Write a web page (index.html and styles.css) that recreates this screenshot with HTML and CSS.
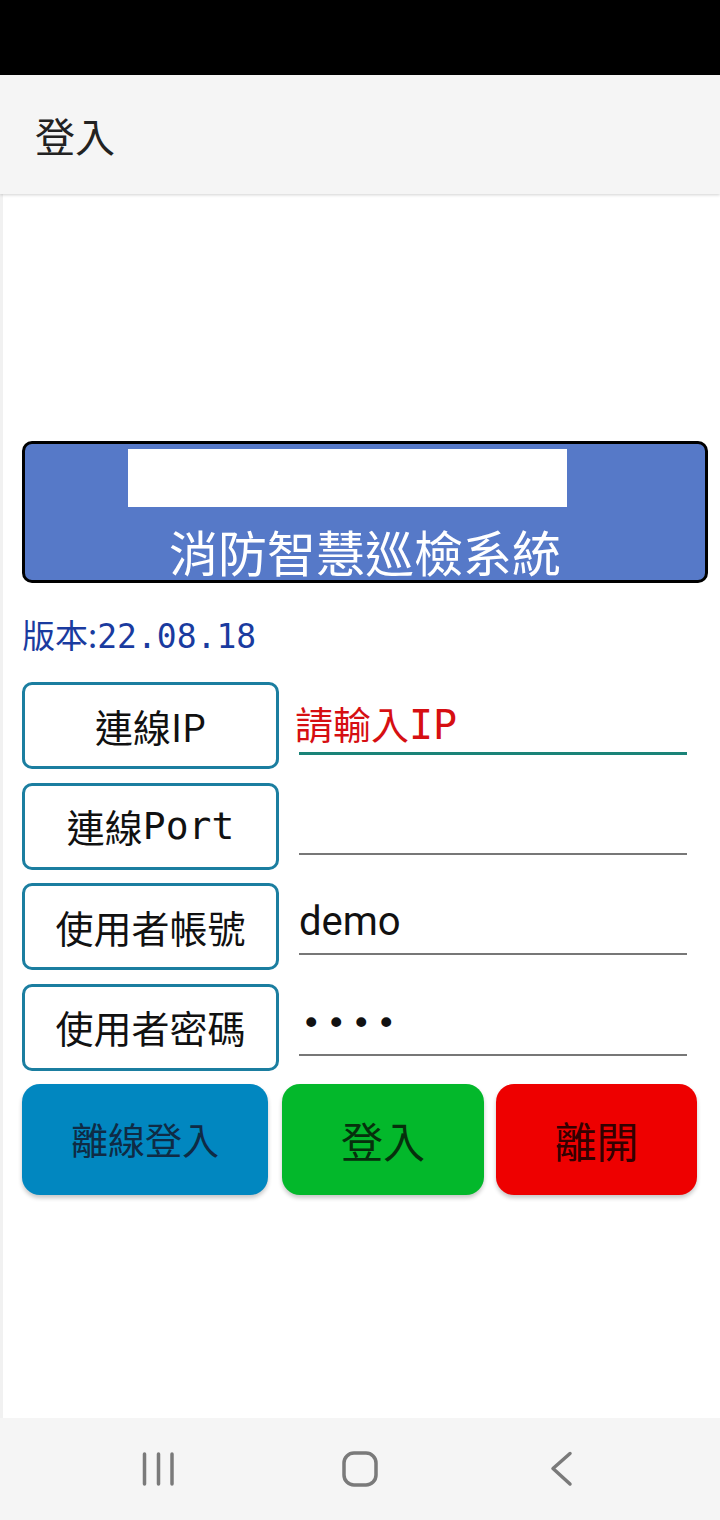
FILE: index.html
```html
<!DOCTYPE html>
<html lang="zh-Hant">
<head>
<meta charset="utf-8">
<title>登入</title>
<link rel="stylesheet" href="styles.css">
</head>
<body>
<div class="screen">
  <div class="statusbar"></div>
  <header class="appbar"><h1 class="appbar-title">登入</h1></header>
  <main class="content">
    <section class="banner">
      <div class="banner-logo"></div>
      <div class="banner-title">消防智慧巡檢系統</div>
    </section>
    <p class="version">版本:<span class="mono">22.08.18</span></p>
    <div class="form">
      <div class="row">
        <div class="label">連線IP</div>
        <div class="field field-focus"><span class="hint">請輸入<span class="mono-ip">IP</span></span></div>
      </div>
      <div class="row">
        <div class="label">連線<span class="mono">Port</span></div>
        <div class="field"></div>
      </div>
      <div class="row">
        <div class="label">使用者帳號</div>
        <div class="field"><span class="value">demo</span></div>
      </div>
      <div class="row">
        <div class="label">使用者密碼</div>
        <div class="field"><span class="dots">••••</span></div>
      </div>
    </div>
    <div class="actions">
      <div class="btn btn-blue">離線登入</div>
      <div class="btn btn-green">登入</div>
      <div class="btn btn-red">離開</div>
    </div>
  </main>
  <nav class="navbar">
    <svg class="nav-recent" width="34" height="34" viewBox="0 0 34 34"><g stroke="#7a7a7a" stroke-width="3.5" stroke-linecap="round"><line x1="2.5" y1="2" x2="2.5" y2="32"/><line x1="16.5" y1="2" x2="16.5" y2="32"/><line x1="30" y1="2" x2="30" y2="32"/></g></svg>
    <svg class="nav-home" width="36" height="36" viewBox="0 0 36 36"><rect x="2" y="2" width="32" height="32" rx="10" fill="none" stroke="#7a7a7a" stroke-width="3.5"/></svg>
    <svg class="nav-back" width="24" height="36" viewBox="0 0 24 36"><polyline points="20,2.5 3,17.5 20,33" fill="none" stroke="#7a7a7a" stroke-width="3.5" stroke-linecap="round" stroke-linejoin="round"/></svg>
  </nav>
</div>
</body>
</html>
```

FILE: styles.css
```css
html, body {
  margin: 0;
  padding: 0;
  background: #fff;
}
body {
  font-family: "Noto Sans CJK TC", "Noto Sans", sans-serif;
}
.screen {
  width: 720px;
  height: 1520px;
  display: flex;
  flex-direction: column;
  overflow: hidden;
}
.statusbar {
  flex: none;
  height: 75px;
  background: #000;
}
.appbar {
  flex: none;
  height: 119px;
  box-sizing: border-box;
  background: #f5f5f5;
  display: flex;
  align-items: center;
  padding-left: 35px;
  box-shadow: 0 1px 3px rgba(0, 0, 0, 0.18);
  position: relative;
  z-index: 1;
}
.appbar-title {
  margin: 0;
  font-size: 40px;
  font-weight: 400;
  line-height: 1;
  color: #222;
}
.content {
  flex: 1;
  padding: 247px 12px 0 22px;
  box-shadow: inset 3px 0 0 #f1f1f1;
}
.banner {
  height: 142px;
  box-sizing: border-box;
  border: 3px solid #000;
  border-radius: 10px;
  background: #5679c8;
  display: flex;
  flex-direction: column;
  align-items: center;
  padding-top: 5px;
}
.banner-logo {
  align-self: flex-start;
  margin-left: 103px;
  width: 439px;
  height: 58px;
  background: #fff;
}
.banner-title {
  margin-top: 20px;
  font-size: 49px;
  line-height: 48px;
  color: #fff;
}
.version {
  margin: 31px 0 0;
  font-size: 33px;
  line-height: 40px;
  color: #1a3b9f;
}
.mono {
  font-family: "DejaVu Sans Mono", monospace;
}
.form {
  margin-top: 25px;
  display: flex;
  flex-direction: column;
  gap: 13.5px;
}
.row {
  display: flex;
  height: 87px;
}
.label {
  flex: none;
  width: 257px;
  box-sizing: border-box;
  border: 3px solid #1b7ea0;
  border-radius: 10px;
  display: flex;
  align-items: center;
  justify-content: center;
  font-size: 38px;
  line-height: 1;
  color: #111;
}
.field {
  flex: none;
  margin-left: 20px;
  width: 388px;
  height: 72px;
  box-sizing: border-box;
  border-bottom: 2px solid #777;
  display: flex;
  align-items: center;
  padding-top: 8px;
}
.field-focus {
  height: 73px;
  border-bottom: 3px solid #1a8378;
  padding-top: 14px;
}
.hint {
  margin-left: -4px;
  font-size: 38px;
  line-height: 1;
  color: #d60f12;
}
.mono-ip {
  font-family: "DejaVu Sans Mono", monospace;
  font-size: 40px;
}
.value {
  font-family: Roboto, "Noto Sans", sans-serif;
  font-size: 40px;
  line-height: 1;
  color: #111;
}
.dots {
  margin-left: 2px;
  font-family: "DejaVu Sans Mono", monospace;
  font-size: 34px;
  letter-spacing: 4.5px;
  line-height: 1;
  color: #111;
}
.actions {
  margin-top: 13.5px;
  display: flex;
}
.btn {
  flex: none;
  height: 111px;
  border-radius: 18px;
  display: flex;
  align-items: center;
  justify-content: center;
  font-size: 42px;
  line-height: 1;
  box-shadow: 0 3px 4px rgba(0, 0, 0, 0.22);
}
.btn-blue {
  width: 246px;
  background: #0187c0;
  font-size: 37px;
  color: #0f2b45;
}
.btn-green {
  width: 202px;
  margin-left: 14px;
  background: #03b82b;
  color: #06300c;
}
.btn-red {
  width: 201px;
  margin-left: 12px;
  background: #ee0000;
  color: #330000;
}
.navbar {
  flex: none;
  height: 102px;
  background: #f5f5f5;
  display: flex;
  align-items: center;
  padding-left: 142px;
}
.nav-home {
  margin-left: 166px;
}
.nav-back {
  margin-left: 172px;
}
```
